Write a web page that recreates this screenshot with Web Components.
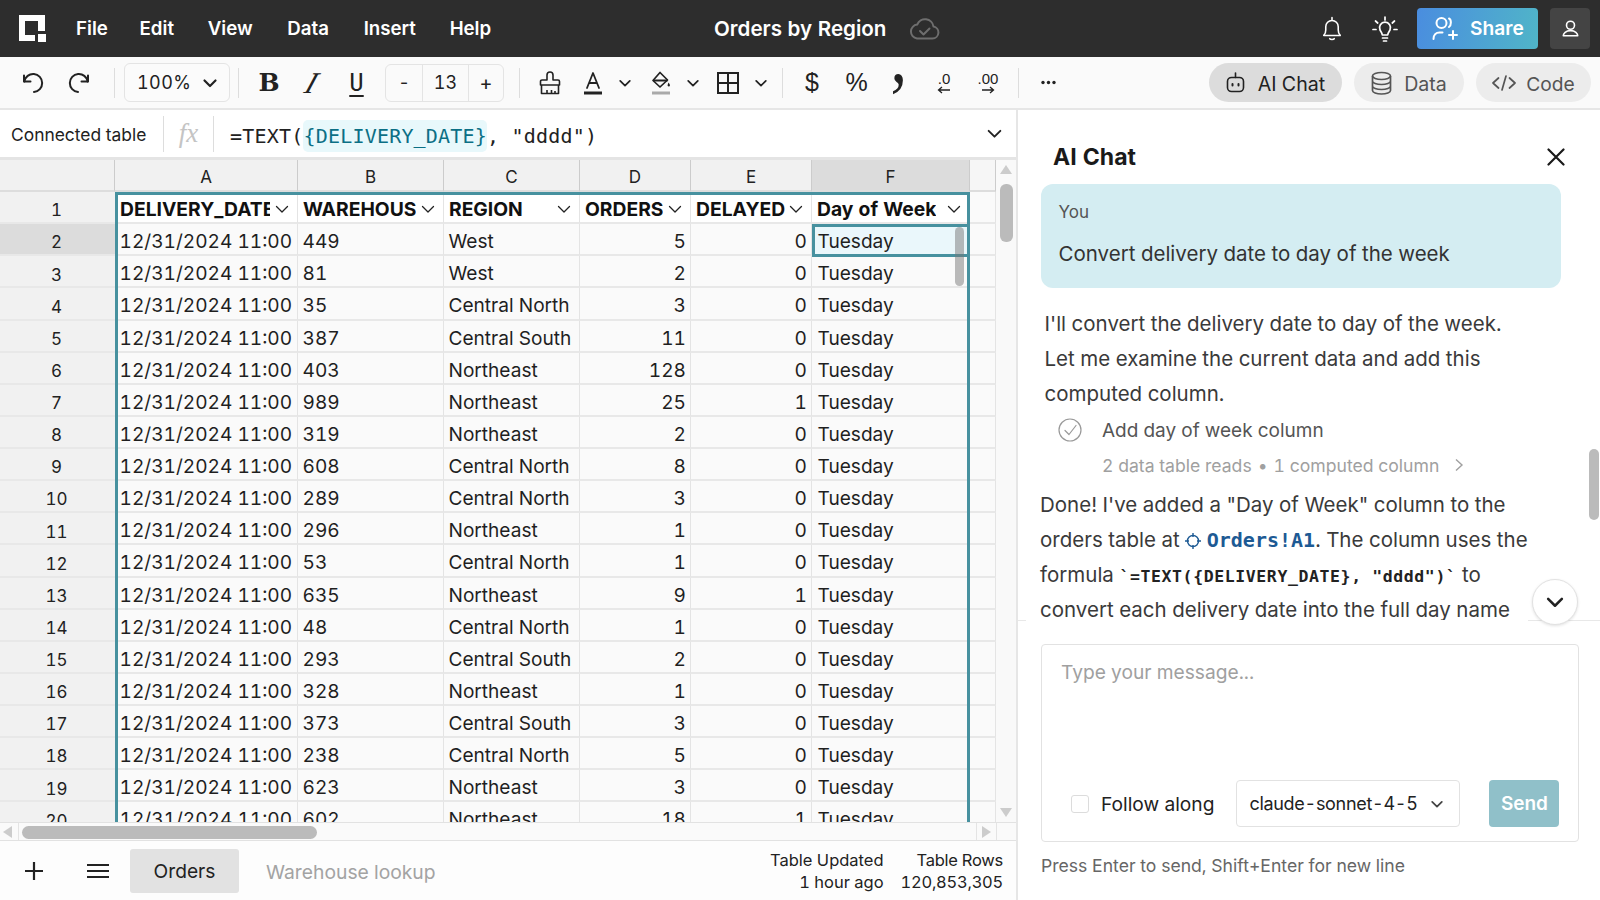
<!DOCTYPE html>
<html>
<head>
<meta charset="utf-8">
<title>Orders by Region</title>
<style>
  html, body { margin: 0; height: 100%; overflow: hidden; }
  body { font-family: Inter, "Noto Sans", sans-serif; font-variant-numeric: tabular-nums; color: #222; background: #fff; }
</style>
</head>
<body>
<app-shell>
  <top-bar slot="top">Orders by Region</top-bar>
  <tool-bar slot="tools"></tool-bar>
  <formula-bar slot="formula"></formula-bar>
  <sheet-grid slot="grid"></sheet-grid>
  <sheet-tabs slot="tabs"></sheet-tabs>
  <chat-panel slot="chat">
    <chat-bubble>Convert delivery date to day of the week</chat-bubble>
    <chat-composer></chat-composer>
  </chat-panel>
</app-shell>

<script>
// helper: shadow root from a string
function mount(el, html) {
  const tpl = document.createElement("template");
  tpl.innerHTML = html;
  el.attachShadow({ mode: "open" }).appendChild(tpl.content.cloneNode(true));
}

const chev = (w, c, sw) => `<svg width="${w}" height="${w}" viewBox="0 0 16 16" fill="none" stroke="${c || "#222"}" stroke-width="${sw || 1.8}" stroke-linecap="round" stroke-linejoin="round"><path d="M2.5 5.5 8 11l5.5-5.5"/></svg>`;

class AppShell extends HTMLElement {
  connectedCallback() {
    mount(this, `<style>
      :host { display: grid; width: 1600px; height: 900px; overflow: hidden;
        grid-template-columns: 1016px 584px; grid-template-rows: 57px 53px 1fr; }
      .top, .tools { grid-column: 1 / 3; display: block; }
      .left { display: flex; flex-direction: column; min-height: 0; }
      .right { min-height: 0; border-left: 2px solid #e6e6e6; }
    </style>
    <div class="top"><slot name="top"></slot></div>
    <div class="tools"><slot name="tools"></slot></div>
    <div class="left"><slot name="formula"></slot><slot name="grid"></slot><slot name="tabs"></slot></div>
    <div class="right"><slot name="chat"></slot></div>`);
  }
}

class TopBar extends HTMLElement {
  connectedCallback() {
    mount(this, `<style>
      :host { display: flex; align-items: center; height: 57px; background: #2d2d2d; color: #fff; position: relative; }
      .logo { margin-left: 19px; display: flex; }
      nav { display: flex; margin-left: 30px; gap: 33.700px; font-size: 18.700px; font-weight: 600; }
      .title { position: absolute; left: 714px; top: 0; line-height: 57px; font-size: 20.600px; font-weight: 600; }
      .cloud { position: absolute; left: 909px; top: 18px; }
      .right { margin-left: auto; display: flex; align-items: center; margin-right: 10px; }
      .share { display: flex; align-items: center; gap: 11px; width: 121px; height: 41px; box-sizing: border-box; padding-left: 15px;
        margin-left: 19px; border-radius: 4px; font-size: 19.200px; font-weight: 600;
        background: linear-gradient(100deg, #4a8ddf, #50b5c8); }
      .share span { padding-bottom: 1px; }
      .me { display: flex; align-items: center; justify-content: center; width: 40px; height: 41px; margin-left: 12px; border-radius: 4px; background: #444; }
    </style>
    <svg class="logo" width="27" height="28" viewBox="0 0 27 28"><path fill="#fff" fill-rule="evenodd" d="M0 0h26v16h-7V6H6v14h10v6H0z"/><rect x="19" y="19" width="8" height="8" fill="#fff"/></svg>
    <nav><span>File</span><span style="margin-left:-2px">Edit</span><span>View</span><span style="margin-left:1px">Data</span><span style="margin-left:1px">Insert</span><span>Help</span></nav>
    <span class="title"><slot></slot></span>
    <svg class="cloud" width="31" height="22" viewBox="0 0 31 22" fill="none" stroke="#6e6e6e" stroke-width="2" stroke-linecap="round" stroke-linejoin="round"><path d="M8 20.5h15.5a6 6 0 0 0 1-11.9A8.5 8.5 0 0 0 8.2 6.6 7 7 0 0 0 8 20.5z"/><path d="m11 13 3.5 3.5 6-6"/></svg>
    <div class="right">
      <svg width="22" height="26" viewBox="0 0 24 28" fill="none" stroke="#fff" stroke-width="1.7" stroke-linecap="round" stroke-linejoin="round"><path d="M12 1.5v2.6M3 21c1.6-1.6 2.2-3 2.2-6v-3.5a6.8 6.8 0 0 1 13.6 0V15c0 3 .6 4.4 2.2 6z"/><path d="M9.5 24.5c.6 1.4 4.4 1.4 5 0"/></svg>
      <svg style="margin-left:29px" width="26" height="28" viewBox="0 0 26 28" fill="none" stroke="#fff" stroke-width="1.7" stroke-linecap="round" stroke-linejoin="round"><path d="M13 2v3M3.5 6l2.2 2M22.500 6l-2.200 2M1 14.500h3M22 14.500h3M8 15a5.500 5.500 0 1 1 10 0c-.8 1.500-2 2.500-2.300 5h-5.400C10 17.500 8.800 16.500 8 15zM10.500 23h5M11.500 26h3"/></svg>
      <div class="share">
        <svg width="27" height="25" viewBox="0 0 27 25" fill="none" stroke="#fff" stroke-width="2" stroke-linecap="round" stroke-linejoin="round"><circle cx="9.500" cy="7" r="5"/><path d="M1.500 23c0-4 2.500-6.500 6-6.500h3M17 2.500c2.500 1 2.500 7 0 8.500M21 15v8M17 19h8"/></svg>
        <span>Share</span>
      </div>
      <div class="me"><svg width="17" height="17" viewBox="0 0 20 20" fill="none" stroke="#fff" stroke-width="1.900" stroke-linejoin="round"><circle cx="10" cy="6.200" r="4.700"/><path d="M1.500 18.500c0-2.800 3-6 8.500-6s8.500 3.200 8.500 6z"/></svg></div>
    </div>`);
  }
}

class ToolBar extends HTMLElement {
  connectedCallback() {
    const btn = (w, ml, inner, cls) => `<span class="b ${cls || ""}" style="width:${w}px;margin-left:${ml}px">${inner}</span>`;
    const sep = (ml) => `<i class="sep" style="margin-left:${ml}px"></i>`;
    const c = chev(14, "#222", 2);
    mount(this, `<style>
      :host { display: flex; align-items: center; height: 53px; box-sizing: border-box; background: #fafafa; border-bottom: 2px solid #e6e6e6; padding-left: 11px; padding-right: 9px; color: #222; }
      .b { display: inline-flex; align-items: center; justify-content: center; flex: none; height: 38px; }
      .sep { display: block; flex: none; width: 1px; height: 30px; background: #ddd; }
      .select { display: flex; align-items: center; box-sizing: border-box; width: 106px; height: 39px; margin-left: 9px; padding-left: 12px; gap: 11px; font-size: 18px; letter-spacing: .4px;
        border: 1px solid #e4e4e4; border-radius: 6px; background: #fbfbfb; }
      .stepper { display: flex; margin-left: 6px; height: 38px; width: 119px; box-sizing: border-box; border: 1px solid #e4e4e4; border-radius: 6px; font-size: 18px; }
      .stepper span { display: flex; align-items: center; justify-content: center; }
      .stepper span:nth-child(1) { width: 36px; border-right: 1px solid #e4e4e4; }
      .stepper span:nth-child(2) { width: 45px; border-right: 1px solid #e4e4e4; }
      .stepper span:nth-child(3) { flex: 1; font-size: 20px; }
      .bold { font: 700 25px "DejaVu Serif", serif; }
      .ital span { display: block; font: 400 30px "Liberation Serif", serif; transform: skewX(-28deg); }
      .under { font: 400 24px "DejaVu Sans Mono", monospace; text-decoration: underline; text-underline-offset: 4px; text-decoration-thickness: 2px; }
      .sym { font: 400 25px "Liberation Sans", sans-serif; }
      .comma span { display: block; font: 400 78px "Liberation Serif", serif; line-height: 1; transform: translateY(-27px) scaleX(.85); }
      .dec { flex-direction: column; font: 400 15px "Liberation Sans", sans-serif; line-height: 14px; }
      .pills { display: flex; margin-left: auto; gap: 12px; }
      .pill { display: flex; align-items: center; justify-content: center; gap: 13px; height: 39px; box-sizing: border-box; padding-top: 2px; border-radius: 20px; background: #ececec; color: #555; font-size: 19.600px; }
      .pill svg { margin-top: -2px; }
      .pill.on { background: #dcdcdc; color: #222; }
    </style>
    ${btn(44, 0, `<svg width="24" height="22" viewBox="0 0 24 22" fill="none" stroke="#222" stroke-width="2" stroke-linecap="round" stroke-linejoin="round"><path d="M3 3.500v6h6.500"/><path d="M3.300 9.500A9 9 0 1 1 13 20"/></svg>`)}
    ${btn(44, 2, `<svg width="24" height="22" viewBox="0 0 24 22" fill="none" stroke="#222" stroke-width="2" stroke-linecap="round" stroke-linejoin="round"><path d="M21 3.500v6h-6.500"/><path d="M20.700 9.500A9 9 0 1 0 11 20"/></svg>`)}
    ${sep(13)}
    <span class="select"><span>100%</span>${chev(16, "#222", 2.2)}</span>
    ${sep(8)}
    ${btn(44, 8, "B", "bold")}${btn(42, 0, "<span>I</span>", "ital")}${btn(45, 1, "U", "under")}
    <span class="stepper" style="margin-left:6px"><span>-</span><span>13</span><span>+</span></span>
    ${sep(15)}
    ${btn(44, 8, `<svg width="22" height="24" viewBox="0 0 22 24" fill="none" stroke="#222" stroke-width="1.600" stroke-linejoin="round"><path d="M8 9V4a3 3 0 0 1 6 0v5h5a1.500 1.500 0 0 1 1.500 1.500V14h-19v-3.500A1.500 1.500 0 0 1 3 9zM2.500 14v8.500h17V14M8 23v-4M12.500 23v-4M16 23v-3"/></svg>`)}
    ${btn(43, -1, `<svg width="20" height="24" viewBox="0 0 20 24" fill="none" stroke="#222" stroke-width="1.800" stroke-linecap="round" stroke-linejoin="round"><path d="m4 17 6-15 6 15M6 12h8"/><path d="M1 22h18" stroke-width="3" stroke-linecap="butt"/></svg>`)}
    ${btn(22, 0, c)}
    ${btn(43, 3, `<svg width="20" height="24" viewBox="0 0 20 24" fill="none" stroke="#222" stroke-width="1.700" stroke-linejoin="round"><path d="M9 1.500 16.500 9 9 16 2 9.500z"/><path d="M2.500 9.500h14" stroke-width="2"/><path fill="#222" stroke="none" d="M17.500 11.500c1.300 2 2 2.800 1 3.800-1 .7-2.300-.2-1.800-1.500z"/><path d="M1 22h18" stroke="#aaa" stroke-width="3"/></svg>`)}
    ${btn(22, 0, c)}
    ${btn(44, 2, `<svg width="22" height="22" viewBox="0 0 22 22" fill="none" stroke="#222" stroke-width="2"><path d="M1 1h20v20H1zM11 1v20M1 11h20"/></svg>`)}
    ${btn(20, 1, c)}
    ${sep(11)}
    ${btn(44, 7, "$", "sym")}${btn(45, 0, "%", "sym")}${btn(40, 0, "<span>,</span>", "comma")}
    ${btn(42, 4, `<span>.0</span><svg width="14" height="8" viewBox="0 0 14 8" fill="none" stroke="#222" stroke-width="1.300"><path d="M13 4H1.500M5 1 1.500 4 5 7"/></svg>`, "dec")}
    ${btn(42, 2, `<span>.00</span><svg width="14" height="8" viewBox="0 0 14 8" fill="none" stroke="#222" stroke-width="1.300"><path d="M1 4h11.500M9 1l3.500 3L9 7"/></svg>`, "dec")}
    ${sep(9)}
    ${btn(44, 7, `<svg width="15" height="5" viewBox="0 0 15 5" fill="#222"><circle cx="2" cy="2.500" r="1.700"/><circle cx="7.500" cy="2.500" r="1.700"/><circle cx="13" cy="2.500" r="1.700"/></svg>`)}
    <div class="pills">
      <div class="pill on" style="width:133px"><svg width="19" height="22" viewBox="0 0 19 22" fill="none" stroke="#222" stroke-width="1.600" stroke-linecap="round"><path d="M9.500 1v4.500"/><rect x="1.500" y="5.500" width="16" height="14" rx="4"/><path d="M6.500 12v1.500M12.500 12v1.500" stroke-width="2"/></svg><span>AI Chat</span></div>
      <div class="pill" style="width:110px;gap:12px"><svg width="21" height="24" viewBox="0 0 21 24" fill="none" stroke="#555" stroke-width="1.700"><ellipse cx="10.500" cy="5" rx="9" ry="3.500"/><path d="M1.500 5v14.500c0 2 4 3.500 9 3.500s9-1.500 9-3.500V5M1.500 10c0 2 4 3.500 9 3.500s9-1.500 9-3.500M1.500 15c0 2 4 3.500 9 3.500s9-1.500 9-3.500"/></svg><span>Data</span></div>
      <div class="pill" style="width:115px;gap:10px;font-size:19.200px"><svg width="24" height="16" viewBox="0 0 24 16" fill="none" stroke="#555" stroke-width="1.700" stroke-linecap="round" stroke-linejoin="round"><path d="M6.500 3 1 8l5.500 5M17.500 3 23 8l-5.500 5M14 1l-4 14"/></svg><span>Code</span></div>
    </div>`);
  }
}

class FormulaBar extends HTMLElement {
  connectedCallback() {
    mount(this, `<style>
      :host { display: flex; align-items: center; height: 50px; box-sizing: border-box; flex: none; background: #fff; border-bottom: 3px solid #e4e4e4; }
      .src { margin-left: 11px; padding-top: 1px; font-size: 17.400px; width: 152px; flex: none; white-space: nowrap; }
      .sep { width: 1px; height: 36px; background: #ddd; flex: none; }
      .fx { width: 49px; text-align: center; flex: none; color: #c4c4c4; font: italic 400 27px "Liberation Serif", serif; }
      .f { margin-left: 16px; padding-top: 5px; font: 400 20px "DejaVu Sans Mono", monospace; letter-spacing: .2px; white-space: pre; color: #222; }
      .ref { background: #e8f8fb; color: #0b6f85; border-radius: 5px; padding: 4px 0; }
      svg { margin-left: auto; margin-right: 13px; }
    </style>
    <span class="src">Connected table</span><i class="sep"></i><span class="fx">fx</span><i class="sep"></i>
    <span class="f">=TEXT(<span class="ref">{DELIVERY_DATE}</span>, "dddd")</span>
    ${chev(17, "#222", 1.8)}`);
  }
}

class SheetGrid extends HTMLElement {
  connectedCallback() {
    const data = [
      ["449", "West", 5, 0], ["81", "West", 2, 0], ["35", "Central North", 3, 0], ["387", "Central South", 11, 0],
      ["403", "Northeast", 128, 0], ["989", "Northeast", 25, 1], ["319", "Northeast", 2, 0], ["608", "Central North", 8, 0],
      ["289", "Central North", 3, 0], ["296", "Northeast", 1, 0], ["53", "Central North", 1, 0], ["635", "Northeast", 9, 1],
      ["48", "Central North", 1, 0], ["293", "Central South", 2, 0], ["328", "Northeast", 1, 0], ["373", "Central South", 3, 0],
      ["238", "Central North", 5, 0], ["623", "Northeast", 3, 0], ["602", "Northeast", 18, 1],
    ];
    const heads = ["DELIVERY_DATE", "WAREHOUS", "REGION", "ORDERS", "DELAYED", "Day of Week"];
    const c = chev(16, "#222", 1.300);
    let h = `<div class="ch"></div>`;
    "ABCDEF".split("").forEach((l) => { h += `<div class="ch ${l === "F" ? "sel" : ""}">${l}</div>`; });
    h += `<div class="ch end"></div><div class="bar"></div>`;
    h += `<div class="rh">1</div>`;
    heads.forEach((t, i) => { h += `<div class="c head"><span class="t" ${i === 0 ? 'style="max-width:150px"' : ""}>${t}</span>${c}</div>`; });
    h += `<div class="c g"></div><div class="bar"></div>`;
    data.forEach((r, i) => {
      const n = i + 2;
      h += `<div class="rh ${n === 2 ? "sel" : ""}">${n}</div>`;
      h += `<div class="c">12/31/2024 11:00</div><div class="c">${r[0]}</div><div class="c">${r[1]}</div><div class="c num">${r[2]}</div><div class="c num">${r[3]}</div><div class="c last ${n === 2 ? "active" : ""}">Tuesday</div><div class="c g"></div><div class="bar"></div>`;
    });
    mount(this, `<style>
      :host { display: block; position: relative; flex: 1; min-height: 0; overflow: hidden; background: #fafafa; }
      .grid { display: grid; grid-template-columns: 115px 183px 146px 136px 111px 121px 158px 26px 20px; grid-auto-rows: 32.140px; grid-template-rows: 32px; font-size: 19.100px; }
      .grid > div { box-sizing: border-box; border-right: 1px solid #e4e4e4; border-bottom: 2px solid #e8e8e8; }
      .ch, .rh { display: flex; align-items: center; justify-content: center; background: #f1f1f1; font-size: 17px; color: #222; padding-top: 4px; }
      .rh { padding-top: 6.500px; padding-right: 2px; }
      .grid > .ch { border-right: 1px solid #ccc; border-bottom: 2px solid #ddd; }
      .grid > .rh { border-right: none; }
      .ch.sel, .rh.sel { background: #dcdcdc; }
      .ch.end { background: #f6f6f6; }
      .c { display: flex; align-items: center; padding: 4px 5px 0 4.500px; white-space: nowrap; overflow: hidden; background: #fafafa; color: #1f1f1f; }
      .c.last { padding-left: 5.500px; }
      .c.num { justify-content: flex-end; padding-right: 4px; }
      .c.head { background: #fff; font-size: 19.300px; font-weight: 700; justify-content: space-between; padding: 3px 7px 0 5px; color: #111; }
      .head .t { overflow: hidden; flex: 0 1 auto; }
      .c.active { background: #eaf7fb; }
      .c.g { background: #fafafa; }
      .bar { background: #f9f9f9; border: none !important; }
      .sel-box { position: absolute; left: 115px; top: 32px; width: 855px; height: 700px; box-sizing: border-box; border: 3px solid #47919f; pointer-events: none; }
      .act-box { position: absolute; left: 812px; top: 64px; width: 158px; height: 33px; box-sizing: border-box; border: 3px solid #47919f; pointer-events: none; }
      .thumb { position: absolute; border-radius: 6px; background: rgba(120,120,120,.5); }
      .arrow { position: absolute; left: 1000px; width: 0; height: 0; border-left: 6px solid transparent; border-right: 6px solid transparent; }
    </style>
    <div class="grid">${h}</div>
    <div class="sel-box"></div><div class="act-box"></div>
    <div class="thumb" style="left:955px;top:67px;width:9px;height:59px"></div>
    <div class="thumb" style="left:1000px;top:24px;width:13px;height:58px;background:#bbb"></div>
    <div class="arrow" style="top:5px;border-bottom:9px solid #ccc"></div>
    <div class="arrow" style="top:648px;border-top:9px solid #ccc"></div>`);
  }
}

class SheetTabs extends HTMLElement {
  connectedCallback() {
    mount(this, `<style>
      :host { display: block; flex: none; height: 78px; background: #fff; }
      .hs { position: relative; height: 19px; box-sizing: border-box; background: #fafafa; border-top: 1px solid #e2e2e2; border-bottom: 1px solid #e2e2e2; }
      .thumb { position: absolute; left: 22px; top: 3px; width: 295px; height: 13px; border-radius: 7px; background: #bbb; }
      .tl, .tr { position: absolute; top: 3px; width: 0; height: 0; border-top: 6px solid transparent; border-bottom: 6px solid transparent; }
      .tl { left: 3px; border-right: 9px solid #ccc; }
      .tr { left: 982px; border-left: 9px solid #ccc; }
      .ln { position: absolute; top: 0; bottom: 0; width: 1px; background: #e4e4e4; }
      .row { display: flex; align-items: center; height: 59px; padding-left: 25px; background: #fdfdfd; }
      .tab { display: flex; align-items: center; justify-content: center; width: 109px; height: 44px; margin-left: 21px; border-radius: 3px; background: #e2e2e2; font-size: 19.200px; color: #222; padding-top: 1px; box-sizing: border-box; }
      .other { margin-left: 27px; padding-top: 2px; font-size: 19.300px; color: #a3a3a3; }
      .stats { margin-left: auto; margin-right: 13px; display: flex; gap: 17px; font-size: 16.500px; line-height: 22px; text-align: right; color: #222; }
      .stats div + div { letter-spacing: -.25px; }
    </style>
    <div class="hs"><i class="tl"></i><i class="ln" style="left:18px"></i><div class="thumb"></div><i class="ln" style="left:976px"></i><i class="tr"></i><i class="ln" style="left:996px"></i></div>
    <div class="row">
      <svg width="18" height="18" viewBox="0 0 18 18" stroke="#222" stroke-width="2.200"><path d="M9 0v18M0 9h18"/></svg>
      <svg style="margin-left:44px" width="22" height="16" viewBox="0 0 22 16" stroke="#222" stroke-width="2.200"><path d="M0 2h22M0 8h22M0 14h22"/></svg>
      <div class="tab">Orders</div>
      <div class="other">Warehouse lookup</div>
      <div class="stats"><div>Table Updated<br>1 hour ago</div><div>Table Rows<br>120,853,305</div></div>
    </div>`);
  }
}

class ChatBubble extends HTMLElement {
  connectedCallback() {
    mount(this, `<style>
      :host { display: block; width: 520px; height: 104px; margin-left: 23px; box-sizing: border-box; padding: 16px 17.500px; border-radius: 12px; background: #d4edf2; color: #333; }
      .who { font-size: 17px; line-height: 24px; color: #555; }
      .msg { margin-top: 18px; font-size: 20.500px; line-height: 24px; white-space: nowrap; }
    </style>
    <div class="who">You</div><div class="msg"><slot></slot></div>`);
  }
}

class ChatComposer extends HTMLElement {
  connectedCallback() {
    mount(this, `<style>
      :host { display: block; height: 280px; box-sizing: border-box; padding: 24px 21px 0 23px;
        background: linear-gradient(to right, #e8e8e8 8px, transparent 8px, transparent 510px, #e8e8e8 510px) top / 100% 1px no-repeat; }
      .card { display: flex; flex-direction: column; justify-content: space-between; box-sizing: border-box; height: 198px; padding: 15px 19px 14px 19px; border: 1px solid #e2e2e2; border-radius: 4px; }
      .ph { font-size: 19.200px; line-height: 24px; color: #a0a0a0; }
      .row { display: flex; align-items: center; height: 47px; margin-left: 10px; }
      .box { flex: none; width: 18px; height: 18px; box-sizing: border-box; border: 1px solid #dcdcdc; border-radius: 3px; background: #fff; }
      .fa { margin-left: 12px; font-size: 19.200px; color: #222; white-space: nowrap; }
      .model { flex: none; display: flex; align-items: center; justify-content: space-between; box-sizing: border-box; width: 224px; height: 47px; margin-left: 22px; padding: 0 15px 0 12px; border: 1px solid #e2e2e2; border-radius: 4px; font-size: 18px; letter-spacing: -.3px; color: #222; white-space: nowrap; }
      .send { flex: none; display: flex; align-items: center; justify-content: center; width: 70px; height: 47px; margin-left: 29px; border-radius: 4px; background: #90c0c9; color: #fff; font-size: 19px; font-weight: 600; }
      .hint { margin-top: 13px; font-size: 17.600px; line-height: 22px; color: #666; white-space: nowrap; }
    </style>
    <div class="card">
      <div class="ph">Type your message...</div>
      <div class="row"><i class="box"></i><span class="fa">Follow along</span>
        <div class="model"><span>claude-sonnet-4-5</span>${chev(14, "#444", 2)}</div>
        <div class="send">Send</div></div>
    </div>
    <div class="hint">Press Enter to send, Shift+Enter for new line</div>`);
  }
}

class ChatPanel extends HTMLElement {
  connectedCallback() {
    mount(this, `<style>
      :host { display: flex; flex-direction: column; position: relative; height: 790px; background: #fff; overflow: hidden; }
      .scroll { flex: none; height: 510px; overflow: hidden; }
      header { display: flex; align-items: center; justify-content: space-between; height: 74px; padding: 26px 35px 6px 35px; box-sizing: border-box; }
      h2 { margin: 0; font-size: 23px; font-weight: 700; color: #1a1a1a; }
      p { margin: 0; font-size: 20.500px; line-height: 35px; color: #3a3a3a; white-space: nowrap; }
      .a { margin: 17.500px 0 0 26.500px; }
      .task { display: flex; align-items: center; height: 35px; margin: 2px 0 0 40px; gap: 20px; font-size: 19px; color: #555; }
      .sub { display: flex; align-items: center; height: 35px; margin-left: 84px; font-size: 17.600px; color: #a0a0a0; }
      .b { margin: 4px 0 0 22px; }
      .ref { color: #1d5a94; font: 700 20px "DejaVu Sans Mono", monospace; }
      code { font: 700 16.500px "DejaVu Sans Mono", monospace; letter-spacing: .6px; color: #222; }
      .thumb { position: absolute; left: 571px; top: 339px; width: 10px; height: 71px; border-radius: 5px; background: #bbb; }
      .down { position: absolute; left: 514px; top: 469px; display: flex; align-items: center; justify-content: center; width: 46px; height: 46px; box-sizing: border-box; border: 1px solid #e2e2e2; border-radius: 50%; background: #fff; box-shadow: 0 1px 3px rgba(0,0,0,.12); }
    </style>
    <div class="scroll">
      <header><h2>AI Chat</h2><svg width="18" height="18" viewBox="0 0 18 18" stroke="#1a1a1a" stroke-width="2.200" stroke-linecap="round"><path d="M1.500 1.500l15 15M16.500 1.500l-15 15"/></svg></header>
      <slot></slot>
      <p class="a">I'll convert the delivery date to day of the week.<br>Let me examine the current data and add this<br>computed column.</p>
      <div class="task"><svg width="24" height="24" viewBox="0 0 24 24" fill="none" stroke="#999" stroke-width="1.200" stroke-linecap="round" stroke-linejoin="round"><circle cx="12" cy="12" r="11"/><path d="m7 12.500 4 4 7-9"/></svg><span>Add day of week column</span></div>
      <div class="sub"><span>2 data table reads</span><span style="margin:0 6px">•</span><span>1 computed column</span><svg style="margin-left:15px" width="10" height="14" viewBox="0 0 10 14" fill="none" stroke="#a0a0a0" stroke-width="1.400"><path d="m2 1.500 6 5.500-6 5.500"/></svg></div>
      <p class="b">Done! I've added a "Day of Week" column to the<br>orders table at <svg width="16" height="16" viewBox="0 0 16 16" fill="none" stroke="#1d5a94" stroke-width="1.400" style="vertical-align:-2px"><circle cx="8" cy="8" r="5.500"/><path d="M8 0v4M8 12v4M0 8h4M12 8h4"/></svg> <span class="ref">Orders!A1</span>. The column uses the<br>formula <code>\`=TEXT({DELIVERY_DATE}, "dddd")\`</code> to<br>convert each delivery date into the full day name</p>
    </div>
    <slot name="composer"></slot>
    <div class="thumb"></div>
    <div class="down">${chev(20, "#222", 2)}</div>`);
    this.querySelector("chat-composer").slot = "composer";
  }
}

customElements.define("app-shell", AppShell);
customElements.define("top-bar", TopBar);
customElements.define("tool-bar", ToolBar);
customElements.define("formula-bar", FormulaBar);
customElements.define("sheet-grid", SheetGrid);
customElements.define("sheet-tabs", SheetTabs);
customElements.define("chat-bubble", ChatBubble);
customElements.define("chat-composer", ChatComposer);
customElements.define("chat-panel", ChatPanel);
</script>
</body>
</html>
